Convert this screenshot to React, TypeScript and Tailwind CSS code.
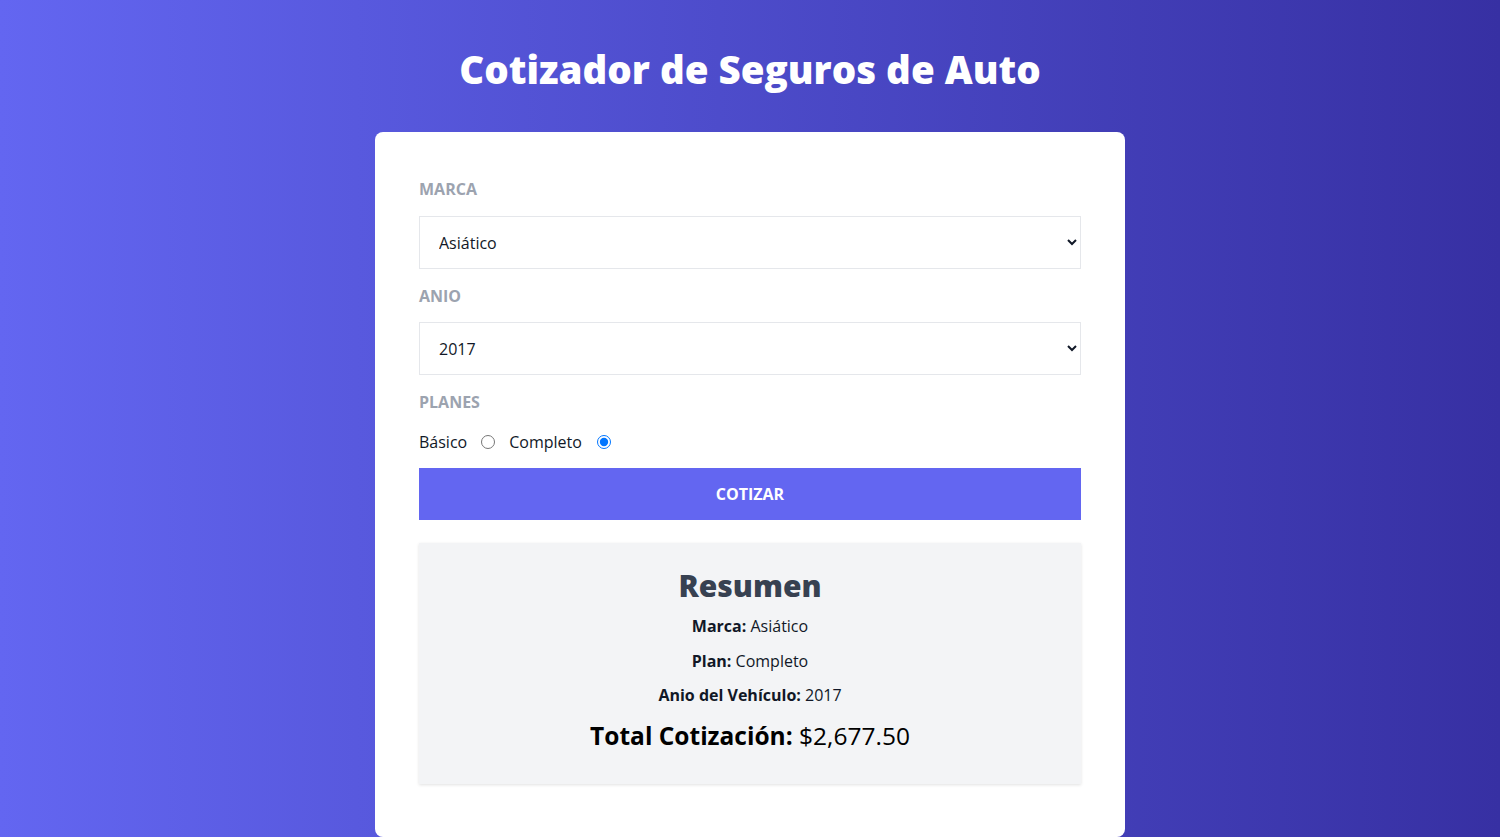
import { useState } from "react";

// Cotizador de seguros — formulario + resumen

const MARCAS = [
  { id: "1", label: "Europeo" },
  { id: "2", label: "Americano" },
  { id: "3", label: "Asiático" },
];

const YEARS = Array.from({ length: 20 }, (_, i) => 2024 - i);

const body = { fontFamily: '"Open Sans", "Noto Sans", sans-serif' };

export default function App() {
  const [marca, setMarca] = useState("3");
  const [year, setYear] = useState("2017");
  const [plan, setPlan] = useState("2");

  const marcaLabel = MARCAS.find((m) => m.id === marca)?.label ?? "";
  const planLabel = plan === "1" ? "Básico" : "Completo";

  return (
    <div className="min-h-[837px] bg-gradient-to-r from-[#6366f1] to-[#3730a3]" style={body}>
      <header className="pt-[41px] pb-[35px] text-center">
        <h1 className="text-[38.5px] leading-[56px] font-extrabold text-white">
          Cotizador de Seguros de Auto
        </h1>
      </header>

      <main className="mx-auto w-[750px] rounded-lg bg-white px-[44px] pt-[45px] pb-[53px]">
        <form className="flex flex-col" onSubmit={(e) => e.preventDefault()}>
          <label className="text-[16px] leading-6 font-bold uppercase text-[#9ca3af]">Marca</label>
          <select
            value={marca}
            onChange={(e) => setMarca(e.target.value)}
            className="mt-[15px] h-[53px] w-full border border-[#e5e7eb] bg-white px-[15px] text-[16px] text-[#111827]"
          >
            {MARCAS.map((m) => (
              <option key={m.id} value={m.id}>{m.label}</option>
            ))}
          </select>

          <label className="mt-[15px] text-[16px] leading-6 font-bold uppercase text-[#9ca3af]">Anio</label>
          <select
            value={year}
            onChange={(e) => setYear(e.target.value)}
            className="mt-[14px] h-[53px] w-full border border-[#e5e7eb] bg-white px-[15px] text-[16px] text-[#111827]"
          >
            {YEARS.map((y) => (
              <option key={y} value={y}>{y}</option>
            ))}
          </select>

          <label className="mt-[15px] text-[16px] leading-6 font-bold uppercase text-[#9ca3af]">Planes</label>
          <div className="mt-[16px] flex h-6 items-center text-[16px] text-[#111827]">
            <span>Básico</span>
            <input
              type="radio"
              name="plan"
              value="1"
              checked={plan === "1"}
              onChange={() => setPlan("1")}
              className="ml-[14px] mr-[14px] h-[14px] w-[14px]"
            />
            <span>Completo</span>
            <input
              type="radio"
              name="plan"
              value="2"
              checked={plan === "2"}
              onChange={() => setPlan("2")}
              className="ml-[15px] h-[14px] w-[14px]"
            />
          </div>

          <button
            type="submit"
            className="mt-[14px] h-[52px] w-full bg-[#6366f1] text-[16px] font-bold uppercase text-white"
          >
            Cotizar
          </button>
        </form>

        <section className="mt-[23px] bg-[#f3f4f6] pt-[25px] pb-[32px] text-center shadow-[0_1px_3px_rgba(0,0,0,0.12)]">
          <h2 className="text-[30px] leading-9 font-extrabold text-[#374151]">Resumen</h2>
          <p className="mt-[10px] text-[16px] leading-6 text-[#111827]">
            <span className="font-bold">Marca:</span> {marcaLabel}
          </p>
          <p className="mt-[11px] text-[16px] leading-6 text-[#111827]">
            <span className="font-bold">Plan:</span> {planLabel}
          </p>
          <p className="mt-[10px] text-[16px] leading-6 text-[#111827]">
            <span className="font-bold">Anio del Vehículo:</span> {year}
          </p>
          <p className="mt-[13px] text-[24.5px] leading-8 text-black">
            <span className="font-bold">Total Cotización:</span> $2,677.50
          </p>
        </section>
      </main>
    </div>
  );
}
